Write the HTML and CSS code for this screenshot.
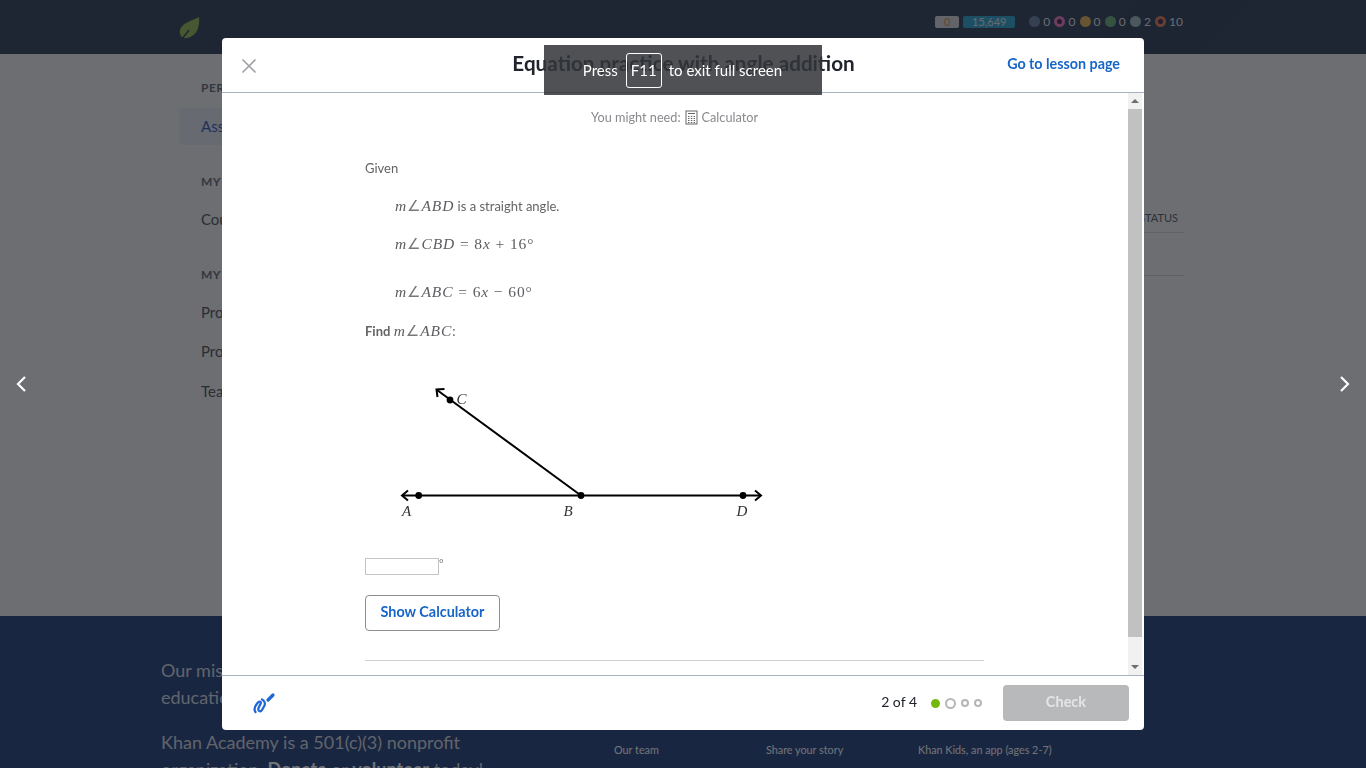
FILE: index.html
```html
<!DOCTYPE html>
<html lang="en">
<head>
    <meta charset="UTF-8">
    <title>Equation practice with angle addition</title>
    <link rel="stylesheet" href="styles.css">
</head>
<body>
    <!-- page behind the modal -->
    <div class="page">
        <header class="top-bar">
            <svg class="leaf" width="24" height="26" viewBox="0 0 24 26">
                <path d="M21 2 C22 12 19 21 9 23 C4 24 1 20 2 15 C4 8 13 6 21 2 Z" fill="#86b33a"/>
                <path d="M4 24 L11 15" stroke="#1c2536" stroke-width="1.5" fill="none"/>
            </svg>
            <div class="stats">
                <span class="box box-grey">0</span>
                <span class="box box-teal">15,649</span>
                <span class="badge"><i class="dot dot-blue"></i>0</span>
                <span class="badge"><i class="dot dot-pink"></i>0</span>
                <span class="badge"><i class="dot dot-gold"></i>0</span>
                <span class="badge"><i class="dot dot-green"></i>0</span>
                <span class="badge"><i class="dot dot-slate"></i>2</span>
                <span class="badge"><i class="dot dot-orange"></i>10</span>
            </div>
        </header>
        <main class="main">
            <nav class="side">
                <div class="side-head first">PERSONAL</div>
                <div class="side-link active">Assignments</div>
                <div class="side-head">MY COURSES</div>
                <div class="side-link">Courses</div>
                <div class="side-head">MY ACCOUNT</div>
                <div class="side-link">Profile</div>
                <div class="side-link">Progress</div>
                <div class="side-link side-last">Teachers</div>
            </nav>
            <div class="table">
                <div class="table-head">STATUS</div>
                <div class="table-row"></div>
            </div>
        </main>
        <footer class="footer">
            <div class="mission">
                <p>Our mission is to provide a free, world-class<br>education for anyone, anywhere.</p>
                <p>Khan Academy is a 501(c)(3) nonprofit<br>organization. <b>Donate</b> or <b>volunteer</b> today!</p>
            </div>
            <div class="foot-col">Our team</div>
            <div class="foot-col">Share your story</div>
            <div class="foot-col">Khan Kids, an app (ages 2-7)</div>
        </footer>
    </div>

    <div class="overlay">
        <svg class="nav-arrow nav-prev" width="12" height="18" viewBox="0 0 12 18"><path d="M10 2 L3 9 L10 16" /></svg>
        <div class="modal">
            <div class="modal-head">
                <svg class="close" width="16" height="16" viewBox="0 0 16 16"><path d="M1.5 1.5 L14.5 14.5 M14.5 1.5 L1.5 14.5"/></svg>
                <h1 class="title">Equation practice with angle addition</h1>
                <a class="lesson-link">Go to lesson page</a>
            </div>
            <div class="modal-body">
                <div class="content">
                    <div class="need">You might need:
                        <svg class="calc" width="13" height="15" viewBox="0 0 13 15">
                            <rect x="1" y="1" width="11" height="13" fill="none" stroke="#666"/>
                            <path d="M3 3.5 H10 M3 6.5 H4.5 M5.8 6.5 H7.3 M8.6 6.5 H10 M3 8.5 H4.5 M5.8 8.5 H7.3 M8.6 8.5 H10 M3 10.5 H4.5 M5.8 10.5 H7.3 M8.6 10.5 H10 M3 12.5 H4.5 M5.8 12.5 H7.3 M8.6 12.5 H10" stroke="#666" stroke-width="1.2"/>
                        </svg>
                        Calculator</div>
                    <p class="given">Given</p>
                    <p class="eq eq-1"><span class="math"><i>m</i><span class="angle">∠</span><i>ABD</i></span> is a straight angle.</p>
                    <p class="eq eq-2"><span class="math"><i>m</i><span class="angle">∠</span><i>CBD</i> = 8<i>x</i> + 16°</span></p>
                    <p class="eq eq-3"><span class="math"><i>m</i><span class="angle">∠</span><i>ABC</i> = 6<i>x</i> − 60°</span></p>
                    <p class="find"><b>Find</b> <span class="math"><i>m</i><span class="angle">∠</span><i>ABC</i></span>:</p>
                    <svg class="figure" width="390" height="155" viewBox="390 375 390 155">
                        <g fill="none" stroke="#000" stroke-width="2">
                            <path d="M402 495.5 H761"/>
                            <path d="M581 495.5 L437 390"/>
                            <path d="M408 490.5 L402 495.5 L408 500.5"/>
                            <path d="M755 490.5 L761 495.5 L755 500.5"/>
                            <path d="M437.5 397 L436.5 389.5 L444.5 389"/>
                        </g>
                        <circle cx="418.7" cy="495.5" r="3.4"/>
                        <circle cx="581" cy="495.5" r="3.4"/>
                        <circle cx="743" cy="495.5" r="3.4"/>
                        <circle cx="450" cy="400" r="3.4"/>
                        <g class="fig-label">
                            <text x="402" y="516">A</text>
                            <text x="563.5" y="516">B</text>
                            <text x="736.5" y="516">D</text>
                            <text x="456.5" y="404">C</text>
                        </g>
                    </svg>
                    <div class="answer"><div class="answer-box"></div><span class="deg">°</span></div>
                    <button class="calc-btn">Show Calculator</button>
                    <div class="rule"></div>
                </div>
                <div class="scrollbar">
                    <div class="scroll-btn"><i class="tri tri-up"></i></div>
                    <div class="scroll-thumb"></div>
                    <div class="scroll-btn scroll-end"><i class="tri tri-down"></i></div>
                </div>
            </div>
            <div class="modal-foot">
                <svg class="scratch" width="26" height="28" viewBox="250 689 26 28">
                    <path d="M268 700 L273 695" stroke-width="3.2"/>
                    <path d="M255.5 712 C253.5 709.5 255 706 257.5 703 C259.5 700.5 261.5 702 260.5 704 L258.5 708 C257.5 711 260.5 712.5 262 710 L264.5 705.5 C265.5 703 264 700.5 262 699.5" stroke-width="2.3"/>
                </svg>
                <div class="progress">
                    <span class="count">2 of 4</span>
                    <div class="dots">
                        <i class="pip pip-done"></i>
                        <i class="pip pip-now"></i>
                        <i class="pip"></i>
                        <i class="pip"></i>
                    </div>
                    <button class="check" disabled>Check</button>
                </div>
            </div>
        </div>
        <svg class="nav-arrow nav-next" width="12" height="18" viewBox="0 0 12 18"><path d="M2 2 L9 9 L2 16" /></svg>
    </div>

    <div class="toast">
        <span>Press</span>
        <span class="key">F11</span>
        <span class="toast-end">to exit full screen</span>
    </div>
</body>
</html>
```

FILE: styles.css
```css
* {
    box-sizing: border-box;
}

html,
body {
    margin: 0;
    height: 768px;
    overflow: hidden;
}

body {
    font-family: "Lato", "Noto Sans", sans-serif;
    color: #21242c;
    background-color: #fff;
}

p {
    margin: 0;
}

/* page behind the modal */
.page {
    height: 768px;
    display: flex;
    flex-direction: column;
}

.top-bar {
    height: 54px;
    background-color: #1a2a44;
    background-image: linear-gradient(135deg, transparent 80%, rgba(0, 0, 0, 0.1) 80%, rgba(0, 0, 0, 0.1) 88%, transparent 88%);
    display: flex;
    align-items: center;
    justify-content: space-between;
    padding: 0 183px 0 178px;
}

.leaf {
    margin-top: 2px;
}

.stats {
    display: flex;
    align-items: center;
    font-size: 12px;
    color: #e4e6ea;
    margin-top: -11px;
}

.box {
    height: 12px;
    line-height: 12px;
    text-align: center;
    border-radius: 2px;
    font-size: 11px;
}

.box-grey {
    width: 24px;
    background-color: #d6d6d6;
    color: #e07a1f;
    margin-right: 4px;
}

.box-teal {
    width: 52px;
    background-color: #149cc4;
    margin-right: 14px;
}

.badge {
    display: flex;
    align-items: center;
    gap: 3px;
    margin-right: 4.2px;
}

.badge:last-child {
    margin-right: 0;
}

.dot {
    width: 11px;
    height: 11px;
    border-radius: 50%;
    display: block;
}

.dot-blue { background-color: #5a7699; }
.dot-pink { background-color: #2a1030; border: 3px solid #f06ab8; }
.dot-gold { background-color: #e2a83a; }
.dot-green { background-color: #5da66a; }
.dot-slate { background-color: #94b4b6; }
.dot-orange { background-color: #2a1030; border: 3px solid #e0703f; }

.main {
    height: 562px;
    background-color: #f0f0ef;
    display: flex;
    padding: 0 182px 0 179px;
}

.side {
    width: 300px;
    font-size: 15px;
}

.side-head {
    font-size: 12px;
    font-weight: 700;
    letter-spacing: 0.5px;
    color: #56585e;
    padding-left: 22px;
    height: 16px;
    line-height: 16px;
    margin-top: 29px;
}

.side-head.first {
    margin-top: 26px;
}

.side-link {
    height: 37px;
    line-height: 37px;
    padding-left: 22px;
    margin-top: 2px;
    color: #3b3e40;
}

.side-last {
    margin-top: 3px;
}

.side-link.active {
    background-color: #e6e7ea;
    color: #1c46b0;
    margin-top: 12px;
    border-radius: 4px;
}

.side-head + .side-link:not(.active) {
    margin-top: 11px;
}

.table {
    flex: 1;
    padding-top: 156px;
}

.table-head {
    height: 23px;
    line-height: 16px;
    text-align: right;
    padding-right: 6px;
    font-size: 11px;
    color: #44464c;
    border-bottom: 1px solid #d0d0d2;
}

.table-row {
    height: 43px;
    border-bottom: 1px solid #d0d0d2;
}

.footer {
    flex: 1;
    background-color: #0a2a66;
    display: flex;
    padding: 41px 0 0 161px;
    color: #d2d6dc;
    overflow: hidden;
}

.mission {
    width: 453px;
    font-size: 18px;
    line-height: 27px;
    flex-shrink: 0;
}

.mission p {
    margin-bottom: 18px;
    white-space: nowrap;
}

.mission b {
    color: #fff;
}

.foot-col {
    width: 152px;
    flex-shrink: 0;
    font-size: 10.8px;
    color: #fff;
    padding-top: 86px;
}

/* overlay */
.overlay {
    position: fixed;
    top: 0;
    left: 0;
    width: 1366px;
    height: 768px;
    background-color: rgba(33, 36, 44, 0.64);
    display: flex;
    align-items: center;
    justify-content: center;
}

.nav-arrow {
    position: absolute;
    top: 375px;
}

.nav-arrow path {
    fill: none;
    stroke: #fff;
    stroke-width: 2.2;
}

.nav-prev {
    left: 15px;
}

.nav-next {
    right: 15px;
}

.modal {
    width: 922px;
    height: 692px;
    background-color: #fff;
    border-radius: 4px;
    display: flex;
    flex-direction: column;
    overflow: hidden;
}

.modal-head {
    height: 55px;
    flex-shrink: 0;
    display: flex;
    align-items: center;
    justify-content: space-between;
    padding: 0 24px 4px 19px;
    border-bottom: 1px solid #a3b1c0;
}

.close path {
    stroke: #a0a1a4;
    stroke-width: 1.6;
    fill: none;
}

.close {
    margin-top: 6px;
}

.title {
    margin: 0;
    font-size: 20.7px;
    font-weight: 700;
    flex: 1;
    text-align: center;
    padding-left: 103px;
}

.lesson-link {
    font-size: 14.3px;
    font-weight: 700;
    color: #1865c8;
}

.modal-body {
    flex: 1;
    display: flex;
    min-height: 0;
}

.content {
    flex: 1;
    padding: 14px 0 0 143px;
    font-size: 14px;
    line-height: 20px;
    color: #636466;
}

.need {
    height: 20px;
    width: 619px;
    text-align: center;
    font-size: 12.7px;
    color: #898a8d;
    display: flex;
    align-items: center;
    justify-content: center;
    gap: 4px;
}

.need .calc {
    margin-top: 1px;
}

.given {
    margin-top: 30.5px;
    height: 20px;
    font-size: 13px;
}

.eq {
    height: 20px;
    padding-left: 30px;
    font-size: 13px;
}

.eq-1 { margin-top: 18.5px; }
.eq-2 { margin-top: 18px; }
.eq-3 { margin-top: 28px; }

.math {
    font-family: "Liberation Serif", serif;
    font-size: 15.5px;
    letter-spacing: 0.9px;
    color: #5c5d60;
}

.angle {
    font-family: "DejaVu Sans", sans-serif;
    font-size: 15px;
    color: #77787a;
}

.find {
    margin-top: 19px;
    height: 20px;
    font-size: 13px;
}

.find b {
    font-weight: 700;
}

.figure {
    display: block;
    margin: 34px 0 0 25px;
}

.fig-label text {
    font-family: "Liberation Serif", serif;
    font-style: italic;
    font-size: 15px;
    fill: #333;
}

.answer {
    margin-top: 28px;
    height: 17px;
    display: flex;
}

.answer-box {
    width: 74px;
    height: 17px;
    border: 1px solid #c4c4c6;
}

.deg {
    font-size: 11px;
    line-height: 11px;
    color: #777;
}

.calc-btn {
    display: block;
    margin-top: 20px;
    width: 135px;
    height: 36px;
    background-color: #fff;
    border: 1px solid #8c8e93;
    border-radius: 4px;
    font-family: "Lato", sans-serif;
    font-size: 14.4px;
    font-weight: 700;
    color: #1865c8;
    padding: 0 0 4px;
}

.rule {
    width: 619px;
    margin-top: 29px;
    border-top: 1px solid #cfcfd1;
}

.scrollbar {
    width: 14px;
    margin-right: 2px;
    background-color: #f1f1f1;
    display: flex;
    flex-direction: column;
}

.scroll-btn {
    height: 16px;
    display: flex;
    align-items: center;
    justify-content: center;
}

.scroll-end {
    margin-top: auto;
}

.tri {
    width: 0;
    height: 0;
    border-left: 4px solid transparent;
    border-right: 4px solid transparent;
}

.tri-up {
    border-bottom: 4px solid #6f6f6f;
}

.tri-down {
    border-top: 4px solid #6f6f6f;
}

.scroll-thumb {
    height: 528px;
    background-color: #c1c1c1;
}

.modal-foot {
    height: 55px;
    flex-shrink: 0;
    border-top: 1px solid #a3b1c0;
    display: flex;
    align-items: center;
    justify-content: space-between;
    padding: 0 15px 0 28px;
}

.scratch {
    stroke: #1f66d8;
    stroke-linecap: round;
    stroke-linejoin: round;
    fill: none;
}

.progress {
    display: flex;
    align-items: center;
}

.count {
    font-size: 14px;
    color: #21242c;
    margin-right: 14px;
    margin-bottom: 4px;
}

.dots {
    display: flex;
    align-items: center;
    gap: 5px;
    margin-right: 21px;
}

.pip {
    display: block;
    width: 8px;
    height: 8px;
    border-radius: 50%;
    border: 2px solid #b5b6b8;
}

.pip-done {
    width: 9px;
    height: 9px;
    background-color: #74b80f;
    border-color: #74b80f;
}

.pip-now {
    width: 11px;
    height: 11px;
}

.check {
    width: 126px;
    height: 36px;
    border: none;
    border-radius: 4px;
    background-color: #b8b9bb;
    color: #e4e5e6;
    font-family: "Lato", sans-serif;
    font-size: 14.5px;
    font-weight: 700;
    padding: 0 0 4px;
}

/* browser full screen notice */
.toast {
    position: fixed;
    top: 45px;
    left: 544px;
    width: 278px;
    height: 50px;
    background-color: rgba(50, 52, 56, 0.86);
    color: #fff;
    font-size: 15px;
    display: flex;
    align-items: center;
    justify-content: center;
    gap: 8px;
}

.toast-end {
    margin-left: -1px;
    margin-right: 1px;
}

.key {
    width: 36px;
    height: 35px;
    line-height: 33px;
    text-align: center;
    border: 1px solid #fff;
    border-radius: 3px;
}
```
